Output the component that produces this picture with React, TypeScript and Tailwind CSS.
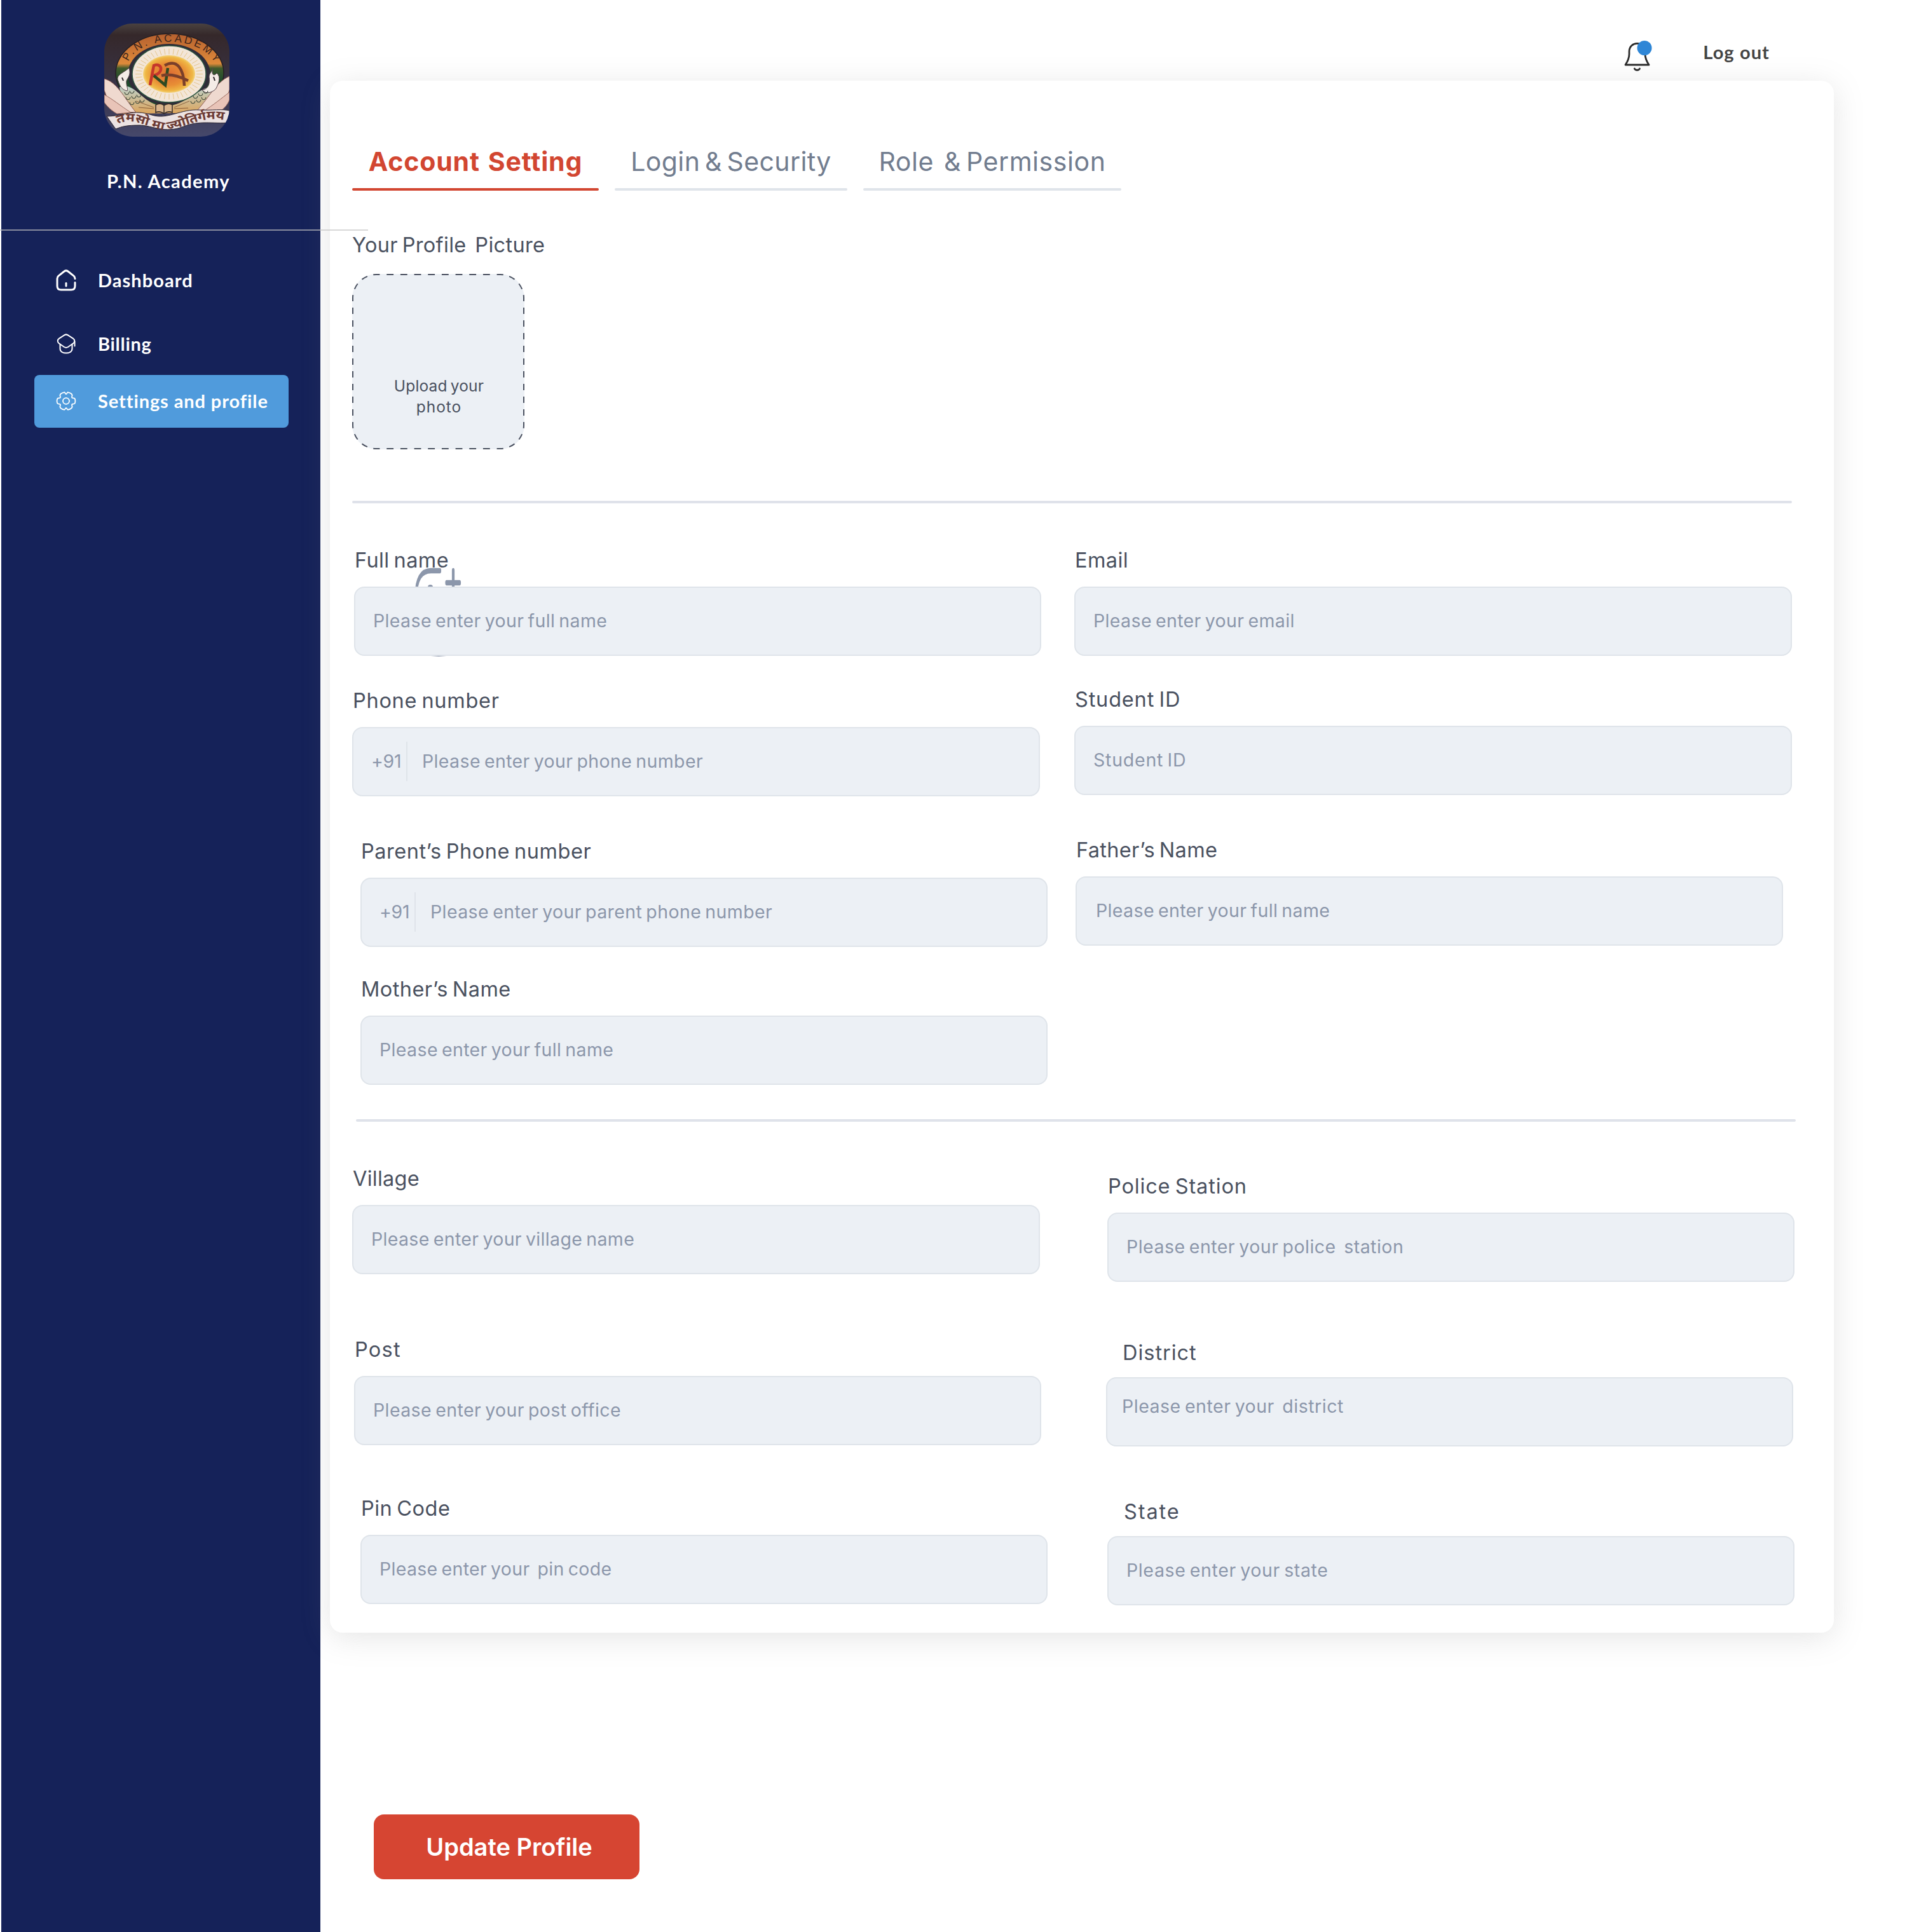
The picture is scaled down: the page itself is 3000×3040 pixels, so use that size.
import React from "react";

function Crest() {
  const rays = Array.from({ length: 44 }, (_, i) => (i * Math.PI * 2) / 44);
  return (
    <svg viewBox="0 0 197 178" className="h-[178px] w-[197px]">
      <defs>
        <clipPath id="crest-clip">
          <rect width="197" height="178" rx="45" />
        </clipPath>
        <linearGradient id="wall" x1="0" y1="0" x2="0" y2="1">
          <stop offset="0" stopColor="#4a4240" />
          <stop offset="0.1" stopColor="#35282a" />
          <stop offset="0.6" stopColor="#38344a" />
          <stop offset="1" stopColor="#46486b" />
        </linearGradient>
        <linearGradient id="ring" x1="0" y1="0" x2="0" y2="1">
          <stop offset="0" stopColor="#b5602f" />
          <stop offset="0.38" stopColor="#de8a3a" />
          <stop offset="0.44" stopColor="#3f5a2c" />
          <stop offset="0.6" stopColor="#1f4a2c" />
        </linearGradient>
        <radialGradient id="sun">
          <stop offset="0" stopColor="#dd6b33" />
          <stop offset="0.6" stopColor="#e88e35" />
          <stop offset="0.9" stopColor="#efb745" />
          <stop offset="1" stopColor="#f3d37b" />
        </radialGradient>
        <linearGradient id="water" x1="0" y1="0" x2="0" y2="1">
          <stop offset="0" stopColor="#bcd3cf" />
          <stop offset="1" stopColor="#dda45a" />
        </linearGradient>
        <path id="arc-title" d="M38 60 C54 19 151 17 174 62" />
        <path id="arc-motto" d="M21 158 C55 144 75 174 108 166 S160 144 197 154" />
      </defs>
      <g clipPath="url(#crest-clip)">
        <rect width="197" height="178" fill="url(#wall)" />
        <ellipse cx="103" cy="78" rx="85" ry="62" fill="url(#ring)" stroke="#241f22" strokeWidth="1.5" />
        <ellipse cx="102" cy="80" rx="65" ry="48" fill="#2f2c38" />
        <path d="M24 100 C50 90 60 130 96 130 C130 130 150 95 182 98 L176 140 L30 142 Z" fill="url(#water)" />
        <ellipse cx="102" cy="79.500" rx="58" ry="44.500" fill="#f3e6d8" stroke="#2d5540" strokeWidth="1.5" />
        {rays.map((a) => (
          <line
            key={a}
            x1={102 + 43 * Math.cos(a)}
            y1={79.5 + 31 * Math.sin(a)}
            x2={102 + 53 * Math.cos(a)}
            y2={79.5 + 40 * Math.sin(a)}
            stroke="#e5c58b"
            strokeWidth="1"
          />
        ))}
        <ellipse cx="102" cy="79.500" rx="41" ry="29.500" fill="url(#sun)" />
        <g fill="none" strokeWidth="4.500">
          <path d="M72 97 L78 66 C92 61 94 79 77 82" stroke="#c5372b" />
          <path d="M78 82 L96 97 L100 70" stroke="#2f4a22" />
          <path d="M95 66 C115 55 125 72 126 98 M90 82 C105 78 120 84 132 90" stroke="#7a3f2a" />
        </g>
        <path d="M0 87 C20 92 30 115 50 140 L14 138 C5 120 2 110 0 105 Z" fill="#efd9cf" stroke="#8e5a52" />
        <path d="M0 112 C12 118 26 130 42 140 L20 142 C8 135 3 128 0 124 Z" fill="#e9c4b8" stroke="#9a6a5f" />
        <path d="M197 83 C176 92 166 115 146 137 L184 139 C192 122 195 112 197 104 Z" fill="#efd9cf" stroke="#8e5a52" />
        <path d="M197 108 C184 118 172 128 156 138 L178 141 C188 135 194 128 197 120 Z" fill="#e9c4b8" stroke="#9a6a5f" />
        <path d="M39 70 C42 80 38 84 35 90 C34 98 38 102 36 106 C26 104 24 96 21 88 C20 80 30 78 39 70 Z" fill="#f4ece6" stroke="#57434a" />
        <path d="M171 70 C168 80 172 84 177 78 C184 84 180 94 176 102 C172 108 160 112 154 105 C166 102 166 92 165 84 C165 78 170 76 171 70 Z" fill="#f4ece6" stroke="#57434a" />
        <path d="M28 85 l2 5 M172 84 l2 6" stroke="#2b2326" strokeWidth="2" />
        {[
          [32, 108], [40, 106], [34, 116], [43, 114], [51, 112], [40, 124], [49, 122], [56, 120],
          [140, 114], [148, 110], [156, 106], [136, 122], [145, 120], [153, 116],
        ].map(([x, y]) => (
          <path key={x + "-" + y} d={`M${x} ${y} c1 5 6 5 7 0`} fill="none" stroke="#3f4a3c" strokeWidth="1.200" />
        ))}
        <path d="M81 128 q7 -4 13 1 q7 -5 13 -1 v12 q-7 -3 -13 2 q-6 -5 -13 -2 Z M94 129 v13" fill="#d9b48a" stroke="#352b28" strokeWidth="1.500" />
        <path d="M50 122 l28 10 M54 132 l24 2 M134 122 l-24 10 M132 133 l-22 1" stroke="#7a4c2c" strokeWidth="0.800" />
        <path d="M4 146 C30 146 45 134 75 144 C100 152 120 134 150 136 C170 137 185 134 197 137 V156 C170 158 150 152 125 162 C95 174 75 160 55 160 C35 160 28 162 18 166 Z" fill="#ece2e2" stroke="#2b2430" />
        <text fill="#3a241c" fontFamily="Liberation Sans" fontSize="17">
          <textPath href="#arc-title" textLength="158" lengthAdjust="spacing">P.N. ACADEMY</textPath>
        </text>
        <text fill="#6b3a33" fontSize="19" fontWeight="bold" fontFamily="Noto Sans, sans-serif">
          <textPath href="#arc-motto" textLength="172" lengthAdjust="spacingAndGlyphs">तमसो मा ज्योतिर्गमय</textPath>
        </text>
      </g>
    </svg>
  );
}

function HomeIcon() {
  return (
    <svg viewBox="0 0 32 34" className="h-[34px] w-8" fill="none" stroke="white" strokeWidth="3" strokeLinecap="round" strokeLinejoin="round">
      <path d="M30 14.500 C30 12.500 29.500 11.500 28 10.200 L19 3 C17 1.500 15 1.500 13 3 L4 10.200 C2.500 11.500 2 12.500 2 14.500 V26 C2 30 4 32 8 32 H24 C28 32 30 30 30 26 V20.500" />
      <path d="M16 21.500 V26" />
    </svg>
  );
}

function CapIcon() {
  return (
    <svg viewBox="0 0 32 34" className="h-[34px] w-8" fill="none" stroke="white" strokeWidth="2" strokeLinecap="round" strokeLinejoin="round">
      <path d="M13.500 3.200 L5 8.700 C2 10.700 2 14.500 5 16.500 L13 22 C15 23.200 17 23.200 19 22 L27 16.500 C30 14.500 30 10.700 27 8.700 L18.500 3.200 C17 2.200 15 2.200 13.500 3.200 Z" />
      <path d="M6.500 17.500 V24.500 C6.500 30 12 31.500 16 31.500 C20 31.500 25.500 30 25.500 24.500 V17.500 M29.500 13 V20.500" />
    </svg>
  );
}

function GearIcon() {
  return (
    <svg viewBox="0 0 32 32" className="h-8 w-8" fill="none" stroke="white" strokeWidth="1.800" strokeLinejoin="round">
      <ellipse cx="16" cy="16" rx="5" ry="4.800" />
      <path d="M12.800 2.300 C14.500 1.800 14.500 5 16 5 C17.500 5 17.500 1.800 19.200 2.300 C21.500 2.900 25 4.300 25.500 6.500 C26 8.500 24.300 9.500 25.200 10.700 C26.200 12 28.500 10.800 29.600 12.200 C30.700 14 30.700 18 29.600 19.800 C28.500 21.200 26.200 20 25.200 21.300 C24.300 22.500 26 23.500 25.500 25.500 C25 27.700 21.500 29.100 19.200 29.700 C17.500 30.200 17.500 27 16 27 C14.500 27 14.500 30.200 12.800 29.700 C10.500 29.100 7 27.700 6.500 25.500 C6 23.500 7.700 22.500 6.800 21.300 C5.800 20 3.500 21.200 2.400 19.800 C1.300 18 1.300 14 2.400 12.200 C3.500 10.800 5.800 12 6.800 10.700 C7.700 9.500 6 8.500 6.500 6.500 C7 4.300 10.500 2.900 12.800 2.300 Z" />
    </svg>
  );
}

function BellIcon() {
  return (
    <svg viewBox="0 0 46 50" className="h-[50px] w-[46px]" fill="none" stroke="#2b2b2b" strokeWidth="2.800" strokeLinecap="round" strokeLinejoin="round">
      <path d="M3 40 C7 34 9 29 9 23 V19 C9 11 15 6.400 21.500 6.400 C28 6.400 34 11 34 19 V23 C34 29 36 34 40 40 Z" />
      <path d="M17.300 46 C18.500 49 24.300 49 25.500 46" />
      <circle cx="33" cy="13.500" r="11.500" fill="#2e86d6" stroke="none" />
    </svg>
  );
}

function NavItem({ icon, label, className }: { icon: React.ReactNode; label: string; className: string }) {
  return (
    <li className={"flex h-[83px] w-[400px] items-center gap-[34px] rounded-lg pb-px pl-[34px] text-[29px] leading-[40px] font-bold " + className}>
      {icon}
      <span className="whitespace-pre">{label}</span>
    </li>
  );
}

function Tab({ label, className, bar, text }: { label: string; className: string; bar: string; text: string }) {
  return (
    <div className={"flex flex-col items-center gap-4 " + className}>
      <span className={"text-[41px] leading-[52px] [word-spacing:-0.1em] whitespace-pre " + text}>{label}</span>
      <div className={"h-1 w-full rounded-full " + bar} />
    </div>
  );
}

interface FieldProps {
  label: string;
  hint: string;
  prefix?: string;
  className: string;
  labelClass: string;
  hintClass: string;
  gapClass?: string;
  boxClass?: string;
}

function Field({
  label,
  hint,
  prefix,
  className,
  labelClass,
  hintClass,
  gapClass = "mb-[19px] ml-px",
  boxClass = "items-center pl-7 pb-px",
}: FieldProps) {
  return (
    <div className={"flex flex-col items-start " + className}>
      <div className={gapClass}>
        <label className={"block text-[32.5px] leading-[44px] [word-spacing:-0.08em] whitespace-pre text-[#4a5160] " + labelClass}>{label}</label>
      </div>
      <div className={"relative flex h-[109px] w-full rounded-2xl border-2 border-[#dfe4ea] bg-[#ecf0f5] text-[28.5px] leading-[40px] [word-spacing:-0.08em] text-[#8c97ab] " + boxClass}>
        {prefix && (
          <>
            <span className="w-[46px] tracking-[-0.01em]">{prefix}</span>
            <div className="mr-[23px] ml-[9px] h-[62px] w-0.5 bg-[#dfe4ea]" />
          </>
        )}
        <span className={"whitespace-pre " + hintClass}>{hint}</span>
      </div>
    </div>
  );
}

function UploadBox() {
  return (
    <div className="relative mt-[23px] flex h-[276px] w-[271px] flex-col items-center rounded-[38px] bg-[#ecf0f5] pt-[160px] text-[24.5px] leading-[33px] [word-spacing:-0.08em] text-[#4a5160]">
      <svg viewBox="0 0 271 276" className="absolute inset-0 h-full w-full" fill="none" stroke="#4a5160" strokeWidth="2" strokeDasharray="1 1" strokeDashoffset="0.5">
        <path d="M38 1 H233" pathLength="18" />
        <path d="M233 1 A37 37 0 0 1 270 38" pathLength="6" />
        <path d="M270 38 V238" pathLength="20" />
        <path d="M270 238 A37 37 0 0 1 233 275" pathLength="6" />
        <path d="M233 275 H38" pathLength="18" />
        <path d="M38 275 A37 37 0 0 1 1 238" pathLength="6" />
        <path d="M1 238 V38" pathLength="20" />
        <path d="M1 38 A37 37 0 0 1 38 1" pathLength="6" />
      </svg>
      <span className="pl-0.5 tracking-[0.007em]">Upload your</span>
      <span className="pl-0.5 tracking-[0.040em]">photo</span>
    </div>
  );
}

function AvatarIcon() {
  return (
    <svg viewBox="0 0 84 146" className="absolute top-[30px] left-[94px] h-[146px] w-[84px]" fill="none">
      <g transform="scale(1 2)" stroke="#8c97ab" strokeWidth="4.200" strokeLinecap="round">
        <path d="M6.500 24 C7 10 15 4 30 4 H44" />
        <path d="M65 4 V20 M54.500 13.500 H75" />
      </g>
      <circle cx="29" cy="34" r="4" fill="#8c97ab" />
      <path d="M20 140 Q42 146 64 140 Z" fill="#8c97ab" />
    </svg>
  );
}

export default function App() {
  return (
    <div className="relative flex h-[3040px] w-[3000px] overflow-hidden bg-white pl-0.5 font-['Inter',sans-serif]">
      <aside className="flex h-full w-[502px] shrink-0 flex-col bg-[#152259] pt-[37px] font-['Lato',sans-serif] text-white">
        <div className="ml-[162px]"><Crest /></div>
        <span className="mt-[50px] ml-[166px] self-start text-[29px] leading-[40px] font-bold tracking-[0.049em]">P.N. Academy</span>
        <ul className="mt-[95px] ml-[52px] flex flex-col">
          <NavItem icon={<HomeIcon />} label="Dashboard" className="tracking-[0.037em]" />
          <NavItem icon={<CapIcon />} label="Billing" className="mt-[17px] tracking-[0.024em]" />
          <NavItem icon={<GearIcon />} label="Settings and profile" className="mt-[7px] bg-[#509bdc] tracking-[0.031em]" />
        </ul>
      </aside>
      <div className="absolute top-[361px] left-0 z-10 h-0.5 w-[579px] bg-[#c3c3c3]/65" />
      <main className="ml-[15px] flex w-[2366px] flex-col">
        <header className="flex h-[127px] items-start justify-end pr-[101px]">
          <div className="relative z-10 mt-[62px] mr-[79px]"><BellIcon /></div>
          <span className="relative z-10 mt-[62px] font-['Lato',sans-serif] text-[29px] leading-[40px] font-bold tracking-[0.038em] text-[#444]">Log out</span>
        </header>
        <section className="relative flex h-[2442px] flex-col rounded-[20px] bg-white pt-[101px] pl-[35px] shadow-[0_8px_48px_rgba(125,125,125,0.2)]">
          <nav className="flex">
            <Tab label="Account  Setting" className="w-[388px]" bar="bg-[#d24631]" text="font-bold tracking-[0.021em] text-[#d24631]" />
            <Tab label="Login & Security" className="ml-[25px] w-[366px]" bar="bg-[#dfe4ea]" text="tracking-[0.009em] text-[#727d8f]" />
            <Tab label="Role  & Permission" className="ml-[25px] w-[406px]" bar="bg-[#dfe4ea]" text="tracking-[0.014em] text-[#727d8f]" />
          </nav>
          <h2 className="mt-16 self-start text-[32.5px] leading-[44px] tracking-[0.010em] [word-spacing:-0.08em] whitespace-pre text-[#4a5160]">Your Profile  Picture</h2>
          <UploadBox />
          <hr className="mt-[81px] h-1 w-[2265px] rounded-full border-0 bg-[#dfe2ea]" />
          <div className="relative mt-[68px] flex items-start">
            <AvatarIcon />
            <div className="flex w-[1136px] flex-col">
              <Field label="Full name" labelClass="tracking-[0.012em]" hint="Please enter your full name" hintClass="tracking-[0.013em]" className="ml-[3px] w-[1081px]" />
              <Field label="Phone number" labelClass="tracking-[0.022em]" prefix="+91" hint="Please enter your phone number" hintClass="tracking-[0.013em]" className="mt-[49px] w-[1082px]" />
              <Field label="Parent’s Phone number" labelClass="tracking-[0.016em]" prefix="+91" hint="Please enter your parent phone number" hintClass="tracking-[0.014em]" className="mt-[65px] ml-[13px] w-[1081px]" />
              <Field label="Mother’s Name" labelClass="tracking-[0.013em]" hint="Please enter your full name" hintClass="tracking-[0.013em]" className="mt-[45px] ml-[13px] w-[1081px]" />
            </div>
            <div className="flex flex-col">
              <Field label="Email" labelClass="tracking-[0.013em]" hint="Please enter your email" hintClass="tracking-[0.013em]" className="w-[1129px]" />
              <Field label="Student ID" labelClass="tracking-[0.025em]" hint="Student ID" hintClass="tracking-[0.027em]" className="mt-[47px] w-[1129px]" />
              <Field label="Father’s Name" labelClass="tracking-[0.010em]" hint="Please enter your full name" hintClass="tracking-[0.013em]" className="mt-[65px] ml-0.5 w-[1113px]" boxClass="items-center pl-[30px] pb-px" />
            </div>
          </div>
          <hr className="mt-[54px] ml-1.5 h-1 w-[2265px] rounded-full border-0 bg-[#dfe2ea]" />
          <div className="mt-[68px] flex items-start">
            <div className="flex w-[1186px] flex-col">
              <Field label="Village" labelClass="tracking-[0.008em]" hint="Please enter your village name" hintClass="tracking-[0.012em]" className="w-[1082px]" />
              <Field label="Post" labelClass="tracking-[0.038em]" hint="Please enter your post office" hintClass="tracking-[0.014em]" className="mt-[97px] ml-[3px] w-[1081px]" />
              <Field label="Pin Code" labelClass="tracking-[0.015em]" hint="Please enter your  pin code" hintClass="tracking-[0.011em]" className="mt-[78px] ml-[13px] w-[1081px]" />
            </div>
            <div className="mt-3 flex flex-col">
              <Field label="Police Station" labelClass="tracking-[0.026em]" hint="Please enter your police  station" hintClass="tracking-[0.017em]" className="ml-0.5 w-[1081px]" />
              <Field label="District" labelClass="tracking-[0.030em]" hint="Please enter your  district" hintClass="tracking-[0.018em]" className="mt-[90px] w-[1081px]" gapClass="mb-4 ml-[26px]" boxClass="items-start pt-6 pl-[23px]" />
              <Field label="State" labelClass="tracking-[0.058em]" hint="Please enter your state" hintClass="tracking-[0.022em]" className="mt-[81px] ml-0.5 w-[1081px]" gapClass="mb-4 ml-[26px]" />
            </div>
          </div>
        </section>
        <button className="mt-[286px] ml-[69px] flex h-[102px] w-[418px] items-center justify-center rounded-2xl bg-[#d64532] pl-2 text-[38px] leading-[52px] font-semibold text-white">
          Update Profile
        </button>
      </main>
    </div>
  );
}
